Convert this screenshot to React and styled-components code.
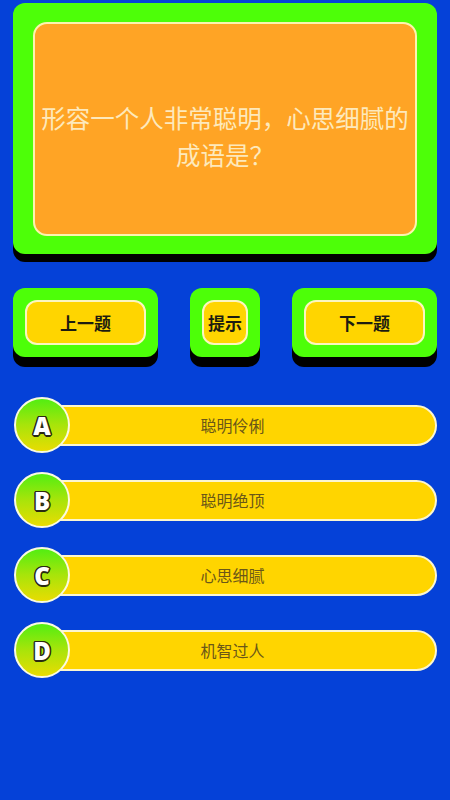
import React from "react";
import styled, { createGlobalStyle } from "styled-components";

const GlobalStyle = createGlobalStyle`
  html, body {
    margin: 0;
    padding: 0;
    background: #0541d8;
  }
  body {
    font-family: "Noto Sans CJK SC", "Noto Sans", sans-serif;
  }
`;

const options = [
  { key: "A", text: "聪明伶俐" },
  { key: "B", text: "聪明绝顶" },
  { key: "C", text: "心思细腻" },
  { key: "D", text: "机智过人" },
];

const App = () => {
  return (
    <>
      <GlobalStyle />
      <Page>
        <QuestionCard>
          <QuestionInner>
            <QuestionText>形容一个人非常聪明，心思细腻的成语是？</QuestionText>
          </QuestionInner>
        </QuestionCard>

        <ButtonRow>
          <NavButton $width={145}>
            <NavLabel>上一题</NavLabel>
          </NavButton>
          <NavButton $width={70}>
            <NavLabel>提示</NavLabel>
          </NavButton>
          <NavButton $width={145}>
            <NavLabel>下一题</NavLabel>
          </NavButton>
        </ButtonRow>

        <OptionList>
          {options.map((o) => (
            <OptionRow key={o.key}>
              <LetterBadge>{o.key}</LetterBadge>
              <OptionBar>{o.text}</OptionBar>
            </OptionRow>
          ))}
        </OptionList>
      </Page>
    </>
  );
};

const Page = styled.div`
  min-height: 800px;
  box-sizing: border-box;
  padding: 3px 13px 0 13px;
  background: #0541d8;
`;

const QuestionCard = styled.div`
  height: 251px;
  box-sizing: border-box;
  padding: 19px 20px 18px;
  background: #4dff08;
  border-radius: 12px;
  box-shadow: 0 8px 0 #000;
  display: flex;
`;

const QuestionInner = styled.div`
  flex: 1;
  background: #ffa425;
  border: 2px solid #fbf3b0;
  border-radius: 14px;
  display: flex;
  align-items: center;
  justify-content: center;
  padding-top: 14px;
  box-sizing: border-box;
`;

const QuestionText = styled.p`
  margin: 0;
  width: 375px;
  text-align: center;
  font-size: 24.5px;
  line-height: 37px;
  color: #fde9bc;
`;

const ButtonRow = styled.div`
  margin-top: 34px;
  display: flex;
  justify-content: space-between;
`;

const NavButton = styled.div`
  width: ${(p) => p.$width}px;
  height: 69px;
  box-sizing: border-box;
  padding: 12px;
  background: #4dff08;
  border-radius: 12px;
  box-shadow: 0 10px 0 #000;
  display: flex;
`;

const NavLabel = styled.div`
  flex: 1;
  background: #ffd500;
  border: 2px solid #fbf6c0;
  border-radius: 12px;
  display: flex;
  align-items: center;
  justify-content: center;
  font-size: 17px;
  font-weight: 700;
  color: #1c1c10;
`;

const OptionList = styled.div`
  margin-top: 40px;
  display: flex;
  flex-direction: column;
  gap: 19px;
`;

const OptionRow = styled.div`
  display: flex;
  align-items: center;
  height: 56px;
  padding-left: 1px;
`;

const LetterBadge = styled.div`
  position: relative;
  z-index: 1;
  width: 56px;
  height: 56px;
  flex: none;
  box-sizing: border-box;
  border: 2.5px solid #fafae0;
  border-radius: 50%;
  background: linear-gradient(180deg, #52ee12 0%, #a8e40a 50%, #e8dc02 100%);
  display: flex;
  align-items: center;
  justify-content: center;
  font-family: "Open Sans", "DejaVu Sans", sans-serif;
  font-weight: 800;
  font-size: 24px;
  color: #ffffff;
  text-shadow:
    1.5px 0 0 #2a2a12, -1.5px 0 0 #2a2a12, 0 1.5px 0 #2a2a12, 0 -1.5px 0 #2a2a12,
    1px 1px 0 #2a2a12, -1px -1px 0 #2a2a12, 1px -1px 0 #2a2a12, -1px 1px 0 #2a2a12;
`;

const OptionBar = styled.div`
  flex: 1;
  margin-left: -28px;
  height: 41px;
  box-sizing: border-box;
  padding-right: 14px;
  background: #ffd500;
  border: 2px solid #fbf6d0;
  border-radius: 0 21px 21px 0;
  display: flex;
  align-items: center;
  justify-content: center;
  font-size: 16px;
  color: #6a5718;
`;

export default App;
